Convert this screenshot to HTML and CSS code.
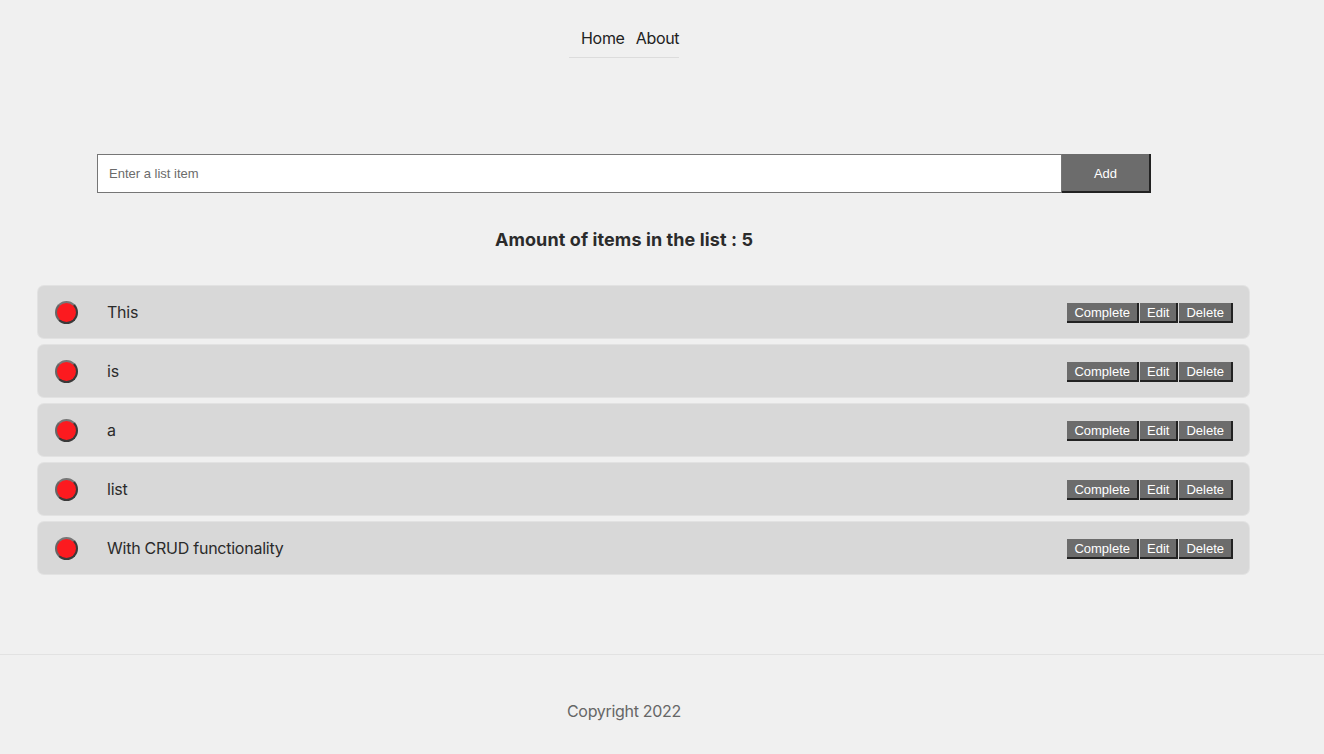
FILE: index.html
```html
<!DOCTYPE html>
<html>
<head>
<meta charset="utf-8">
<link rel="stylesheet" href="styles.css">
</head>
<body>
<div class="page">
  <nav class="nav">
    <a class="nav-link" href="#">Home</a>
    <a class="nav-link" href="#">About</a>
  </nav>
  <main class="main">
    <form class="add-form">
      <input class="add-input" type="text" placeholder="Enter a list item">
      <button class="add-btn" type="button">Add</button>
    </form>
    <h2 class="count">Amount of items in the list : 5</h2>
    <ul class="list">
      <li class="item"><span class="dot"></span><span class="item-text">This</span><div class="actions"><button class="act">Complete</button><button class="act">Edit</button><button class="act">Delete</button></div></li>
      <li class="item"><span class="dot"></span><span class="item-text">is</span><div class="actions"><button class="act">Complete</button><button class="act">Edit</button><button class="act">Delete</button></div></li>
      <li class="item"><span class="dot"></span><span class="item-text">a</span><div class="actions"><button class="act">Complete</button><button class="act">Edit</button><button class="act">Delete</button></div></li>
      <li class="item"><span class="dot"></span><span class="item-text">list</span><div class="actions"><button class="act">Complete</button><button class="act">Edit</button><button class="act">Delete</button></div></li>
      <li class="item"><span class="dot"></span><span class="item-text">With CRUD functionality</span><div class="actions"><button class="act">Complete</button><button class="act">Edit</button><button class="act">Delete</button></div></li>
    </ul>
  </main>
</div>
<footer class="footer">
  <div class="page"><p class="copy">Copyright 2022</p></div>
</footer>
</body>
</html>
```

FILE: styles.css
```css
* { box-sizing: border-box; }
html, body {
  margin: 0;
  padding: 0;
  background: #f0f0f0;
}
body {
  font-family: Inter, "Noto Sans", sans-serif;
  color: #2b2b2b;
}
.page {
  width: 1248px;
}
.nav {
  width: 110px;
  margin: 0 auto;
  padding: 28px 0 9px 12px;
  border-bottom: 1px solid #dcdcdc;
  display: flex;
  gap: 11px;
  line-height: 20px;
}
.nav-link {
  color: #222;
  text-decoration: none;
  font-size: 16px;
  letter-spacing: -0.3px;
}
.main {
  padding-top: 96px;
}
.add-form {
  display: flex;
  width: 1054px;
  height: 39px;
  margin: 0 auto;
}
.add-input {
  flex: 1;
  height: 39px;
  border: 1px solid #767676;
  background: #fff;
  padding: 0 11px;
  font-family: "Liberation Sans", Arial, sans-serif;
  font-size: 13px;
  color: #333;
  outline: none;
  margin: 0;
}
.add-input::placeholder {
  color: #6b6b6b;
}
.add-btn {
  width: 89px;
  height: 39px;
  margin: 0;
  background: #6c6c6c;
  color: #fff;
  border-style: solid;
  border-color: #222;
  border-width: 0 2px 2px 0;
  font-family: "Liberation Sans", Arial, sans-serif;
  font-size: 13px;
  padding: 2px 0 0;
}
.count {
  margin: 36px 0 35px;
  text-align: center;
  font-size: 18px;
  line-height: 22px;
  font-weight: 700;
  color: #2b2b2b;
  letter-spacing: 0.1px;
}
.list {
  list-style: none;
  margin: 0 0 0 38px;
  padding: 0;
  width: 1211px;
  display: flex;
  flex-direction: column;
  gap: 7px;
}
.item {
  height: 52px;
  background: #d8d8d8;
  border-radius: 6px;
  display: flex;
  align-items: center;
  padding: 0 16px 0 17px;
  box-shadow: 0 0 0 1px #e2e2e2;
}
.dot {
  width: 23px;
  height: 23px;
  border-radius: 50%;
  background: #fc1a1f;
  border: 2px solid #3a3a3a;
  border-top-color: #777;
  border-left-color: #666;
  flex: none;
}
.item-text {
  margin-left: 29px;
  font-size: 16px;
  color: #2b2b2b;
  letter-spacing: -0.25px;
  flex: 1;
}
.actions {
  display: flex;
  gap: 1px;
  padding-top: 1px;
}
.act {
  height: 20px;
  margin: 0;
  padding: 1px 7px 0 7px;
  background: #6c6c6c;
  color: #fff;
  border-style: solid;
  border-color: #222;
  border-width: 0 2px 2px 0;
  font-family: "Liberation Sans", Arial, sans-serif;
  font-size: 13px;
  line-height: 17px;
}
.footer {
  margin-top: 80px;
  border-top: 1px solid #e2e2e2;
}
.copy {
  margin: 0;
  padding: 46px 0 0;
  text-align: center;
  font-size: 16px;
  line-height: 20px;
  color: #666;
  letter-spacing: -0.3px;
}
```
